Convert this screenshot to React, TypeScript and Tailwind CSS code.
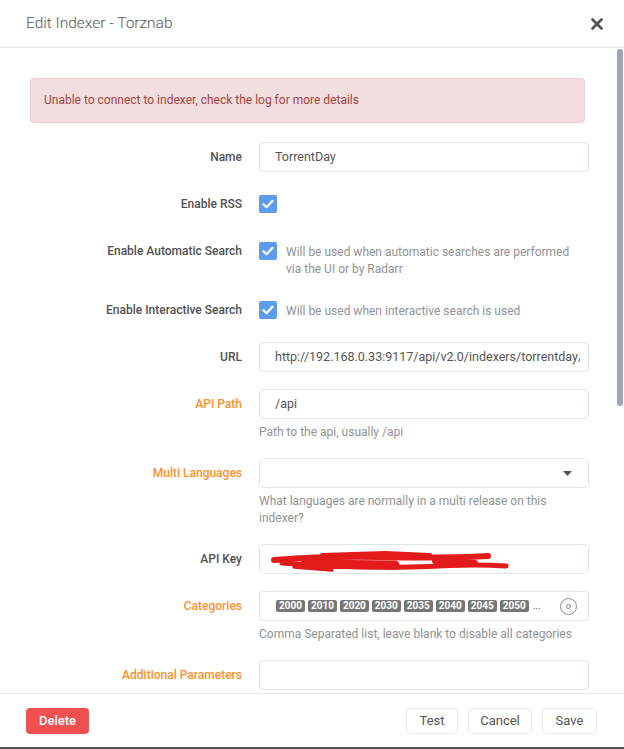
import React from "react";

const categories = ["2000", "2010", "2020", "2030", "2035", "2040", "2045", "2050"];

function Check() {
  return (
    <span className="flex h-[18px] w-[18px] shrink-0 items-center justify-center rounded-[2px] bg-[#5d9cec]">
      <svg width="12" height="10" viewBox="0 0 12 10" fill="none">
        <path d="M1.5 5.2 4.6 8.2 10.5 1.8" stroke="white" strokeWidth="2.2" strokeLinecap="round" strokeLinejoin="round" />
      </svg>
    </span>
  );
}

function Label({ text, orange }: { text: string; orange?: boolean }) {
  return (
    <div
      className={
        "w-[212px] shrink-0 text-right text-[12px] font-medium leading-[30px] " +
        (orange ? "text-[#ff902b]" : "text-[#515253]")
      }
    >
      {text}
    </div>
  );
}

function Help({ children }: { children: React.ReactNode }) {
  return <div className="mt-[5px] text-[12px] leading-[17px] text-[#909293]">{children}</div>;
}

function Input({ value }: { value?: string }) {
  return (
    <div className="flex h-[30px] w-[330px] items-center overflow-hidden whitespace-nowrap rounded-[4px] border border-[#dde6e9] pl-[15px] pr-[8px] text-[12.5px] text-[#555]">
      <span className="overflow-hidden">{value}</span>
    </div>
  );
}

function Row({ label, orange, children, last }: { label: string; orange?: boolean; children: React.ReactNode; last?: boolean }) {
  return (
    <div className={"flex items-start " + (last ? "" : "mb-[17px]")}>
      <Label text={label} orange={orange} />
      <div className="ml-[17px] w-[330px]">{children}</div>
    </div>
  );
}

function CheckRow({ label, help }: { label: string; help?: React.ReactNode }) {
  return (
    <div className="mb-[17px] flex items-start">
      <Label text={label} />
      <div className="ml-[17px] flex w-[330px] items-start gap-[9px] pt-[6px]">
        <Check />
        {help && <div className="w-[300px] pt-[2px] text-[12px] leading-[17px] text-[#909293]">{help}</div>}
      </div>
    </div>
  );
}

export default function App() {
  return (
    <div className="flex h-[749px] w-[624px] flex-col overflow-hidden border-b-2 border-[#555] bg-white font-['Roboto',sans-serif]">
      {/* Header */}
      <div className="flex h-[48px] shrink-0 items-center justify-between border-b border-[#e5e5e5] pl-[26px] pr-[20px]">
        <h1 className="text-[15.5px] font-light text-[#555]">Edit Indexer - Torznab</h1>
        <svg width="12" height="12" viewBox="0 0 12 12" className="mr-[1px]">
          <path d="M1.5 1.5 10.5 10.5M10.5 1.5 1.5 10.5" stroke="#505050" strokeWidth="2.6" strokeLinecap="round" />
        </svg>
      </div>

      {/* Body */}
      <div className="relative flex-1 overflow-hidden pl-[30px] pt-[30px]">
        <div className="mb-[19px] w-[555px] rounded-[4px] border border-[#ebccd1] bg-[#f2dede] px-[13px] py-[13px] text-[12px] leading-[17px] text-[#a94442]">
          Unable to connect to indexer, check the log for more details
        </div>

        <Row label="Name">
          <Input value="TorrentDay" />
        </Row>

        <CheckRow label="Enable RSS" />
        <CheckRow
          label="Enable Automatic Search"
          help="Will be used when automatic searches are performed via the UI or by Radarr"
        />
        <CheckRow label="Enable Interactive Search" help="Will be used when interactive search is used" />

        <Row label="URL">
          <Input value="http://192.168.0.33:9117/api/v2.0/indexers/torrentday/results/torznab/" />
        </Row>

        <Row label="API Path" orange>
          <Input value="/api" />
          <Help>Path to the api, usually /api</Help>
        </Row>

        <Row label="Multi Languages" orange>
          <div className="flex h-[30px] w-[330px] items-center justify-end rounded-[4px] border border-[#dde6e9] pr-[16px]">
            <svg width="9" height="5" viewBox="0 0 9 5">
              <path d="M0 0h9L4.5 5z" fill="#555" />
            </svg>
          </div>
          <Help>What languages are normally in a multi release on this indexer?</Help>
        </Row>

        <Row label="API Key">
          <div className="relative h-[30px] w-[330px] rounded-[4px] border border-[#dde6e9]">
            <svg className="absolute left-0 top-0" width="330" height="30" viewBox="0 0 330 30" fill="none">
              <g stroke="#e31b1b" strokeLinecap="round" strokeLinejoin="round">
                <path d="M14 15C40 13 80 11 120 12S190 13 228 11" strokeWidth="6" />
                <path d="M22 18C60 21 100 23 150 22S205 18 246 21" strokeWidth="5" />
                <path d="M45 19L135 20" strokeWidth="9" />
                <path d="M62 10L125 8 170 10" strokeWidth="4" />
                <path d="M34 22L72 25" strokeWidth="3.5" />
                <path d="M175 16L215 18" strokeWidth="6" />
              </g>
            </svg>
          </div>
        </Row>

        <Row label="Categories" orange>
          <div className="flex h-[30px] w-[330px] items-center rounded-[4px] border border-[#dde6e9] pl-[16px] pr-[11px]">
            <div className="flex items-center gap-[3px]">
              {categories.map((c) => (
                <span
                  key={c}
                  className="h-[12px] rounded-[2px] bg-[#777] px-[3px] text-[10px] font-bold leading-[12px] text-white"
                >
                  {c}
                </span>
              ))}
              <span className="ml-[1px] text-[10px] leading-[12px] text-[#555]">...</span>
            </div>
            <span className="ml-auto flex h-[17px] w-[17px] items-center justify-center rounded-full border border-[#888]">
              <span className="h-[5px] w-[5px] rounded-full border border-[#888]" />
            </span>
          </div>
          <Help>Comma Separated list, leave blank to disable all categories</Help>
        </Row>

        <Row label="Additional Parameters" orange last>
          <Input />
        </Row>

        {/* scrollbar thumb */}
        <div className="absolute right-[1px] top-[1px] h-[357px] w-[6px] rounded-full bg-[#a0a4b8]" />
      </div>

      {/* Footer */}
      <div className="flex h-[54px] shrink-0 items-center justify-between border-t border-[#e5e5e5] pl-[26px] pr-[27px] text-[13px]">
        <button className="h-[26px] w-[63px] rounded-[4px] bg-[#f05050] font-medium text-white">Delete</button>
        <div className="flex items-center gap-[10px]">
          <button className="h-[26px] w-[52px] rounded-[4px] border border-[#eaeaea] text-[#555]">Test</button>
          <button className="h-[26px] w-[64px] rounded-[4px] border border-[#eaeaea] text-[#555]">Cancel</button>
          <button className="h-[26px] w-[55px] rounded-[4px] border border-[#eaeaea] text-[#555]">Save</button>
        </div>
      </div>
    </div>
  );
}
